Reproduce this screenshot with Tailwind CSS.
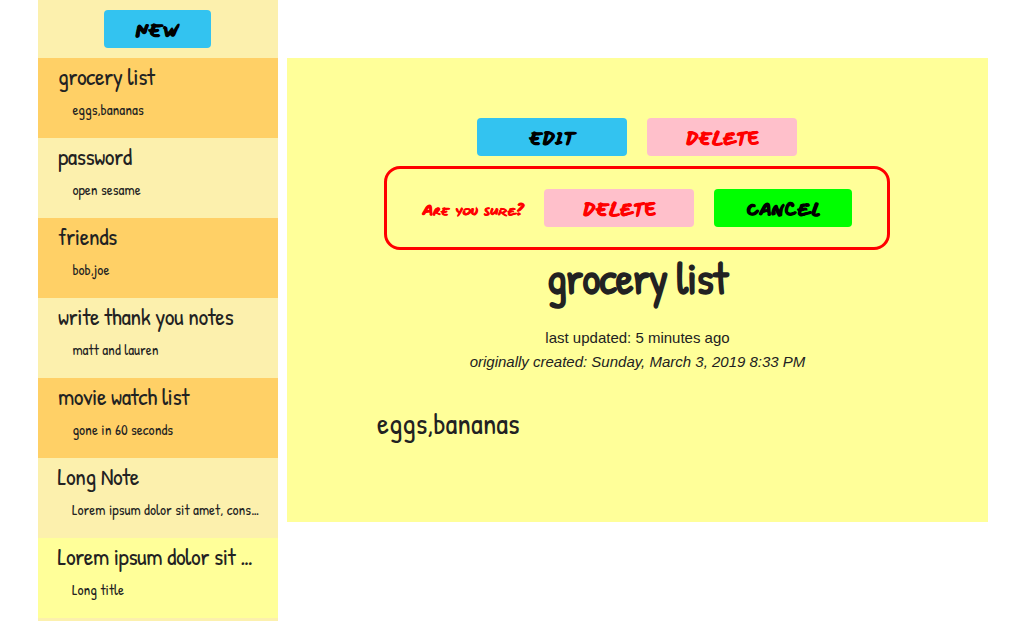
<!DOCTYPE html>
<html lang="en">
<head>
<meta charset="utf-8">
<title>Notes</title>
<script src="https://cdn.jsdelivr.net/npm/@tailwindcss/browser@4"></script>
</head>
<body class="h-[621px] overflow-hidden bg-white text-[#222222] font-['Patrick_Hand','Open_Sans',sans-serif]">
<div class="flex h-full items-start gap-[9px] pl-[38px]">

  <!-- Note list -->
  <aside class="h-full w-60 shrink-0 overflow-hidden bg-[#fcf0ad]">
    <div class="flex h-[58px] items-center justify-center pr-px">
      <button class="flex h-[38px] w-[107px] items-center justify-center rounded bg-[#33c3f0] pt-1 font-['Mansalva','Inter',sans-serif] text-[16.5px] font-bold text-black [-webkit-text-stroke:1px]"><span class="-skew-x-2 scale-x-[1.08]">NEW</span></button>
    </div>
    <ul class="whitespace-nowrap">
      <li class="h-20 bg-[#ffd066] pl-5">
        <h2 class="h-[37px] text-2xl leading-[37px] tracking-[-0.5px]">grocery list</h2>
        <p class="ml-[14.4px] text-[15px] leading-[29px]">eggs,bananas</p>
      </li>
      <li class="h-20 bg-[#fcf0ad] pl-5">
        <h2 class="h-[37px] text-2xl leading-[37px] tracking-[-0.5px]">password</h2>
        <p class="ml-[14.4px] text-[15px] leading-[29px]">open sesame</p>
      </li>
      <li class="h-20 bg-[#ffd066] pl-5">
        <h2 class="h-[37px] text-2xl leading-[37px] tracking-[-0.5px]">friends</h2>
        <p class="ml-[14.4px] text-[15px] leading-[29px]">bob,joe</p>
      </li>
      <li class="h-20 bg-[#fcf0ad] pl-5">
        <h2 class="h-[37px] text-2xl leading-[37px] tracking-[-0.5px]">write thank you notes</h2>
        <p class="ml-[14.4px] text-[15px] leading-[29px]">matt and lauren</p>
      </li>
      <li class="h-20 bg-[#ffd066] pl-5">
        <h2 class="h-[37px] text-2xl leading-[37px] tracking-[-0.5px]">movie watch list</h2>
        <p class="ml-[14.4px] text-[15px] leading-[29px]">gone in 60 seconds</p>
      </li>
      <li class="h-20 bg-[#fcf0ad] pl-[19.5px]">
        <h2 class="h-[37px] text-2xl leading-[37px] tracking-[-0.5px]">Long Note</h2>
        <p class="ml-[14.4px] text-[15px] leading-[29px]">Lorem ipsum dolor sit amet, cons…</p>
      </li>
      <li class="h-20 bg-[#ffff99] pl-[19.5px]">
        <h2 class="h-[37px] text-2xl leading-[37px] tracking-[-0.5px]">Lorem ipsum dolor sit …</h2>
        <p class="ml-[14.4px] text-[15px] leading-[29px]">Long title</p>
      </li>
    </ul>
  </aside>

  <!-- Selected note -->
  <main class="mt-[58px] flex h-[464px] w-[701px] flex-col items-center bg-[#ffff99] pt-[60px] pr-px">
    <div class="flex gap-5 font-['Mansalva','Inter',sans-serif] text-[16.5px] font-bold [-webkit-text-stroke:1px]">
      <button class="flex h-[38px] w-[150px] items-center justify-center rounded bg-[#33c3f0] pt-1 text-black"><span class="-skew-x-2">EDIT</span></button>
      <button class="flex h-[38px] w-[150px] items-center justify-center rounded bg-[#ffc0cb] pt-1 text-[#ff0000]"><span class="-skew-x-2">DELETE</span></button>
    </div>

    <div class="mt-[10px] flex h-[84px] w-[506px] items-center gap-5 rounded-2xl border-[3px] border-[#ff0000] pl-[35px] font-['Mansalva','Inter',sans-serif] text-[16.5px] font-bold [-webkit-text-stroke:1px]">
      <p class="w-[102px] pt-[5px] whitespace-nowrap text-[#ff0000] [-webkit-text-stroke:0.7px]"><span class="inline-block origin-left -skew-x-2 scale-x-[1.1] text-[14px] [font-variant-caps:small-caps] [word-spacing:2px]">Are you sure?</span></p>
      <button class="flex h-[38px] w-[150px] items-center justify-center rounded bg-[#ffc0cb] pt-1 text-[#ff0000]"><span class="-skew-x-2">DELETE</span></button>
      <button class="flex h-[38px] w-[138px] items-center justify-center rounded bg-[#00ff00] pt-1 text-black"><span class="-skew-x-2 scale-x-[1.04]">CANCEL</span></button>
    </div>

    <h1 class="text-[45px] leading-[56px] font-bold tracking-[-1px] whitespace-nowrap">grocery list</h1>
    <div class="mt-5 pl-px text-center font-['Liberation_Sans',Arial,sans-serif] text-[15px] leading-6">
      <p>last updated: 5 minutes ago</p>
      <p class="italic">originally created: Sunday, March 3, 2019 8:33 PM</p>
    </div>
    <p class="mt-[29px] ml-[90px] self-start text-[30px] leading-[41px]">eggs,bananas</p>
  </main>
</div>
</body>
</html>
